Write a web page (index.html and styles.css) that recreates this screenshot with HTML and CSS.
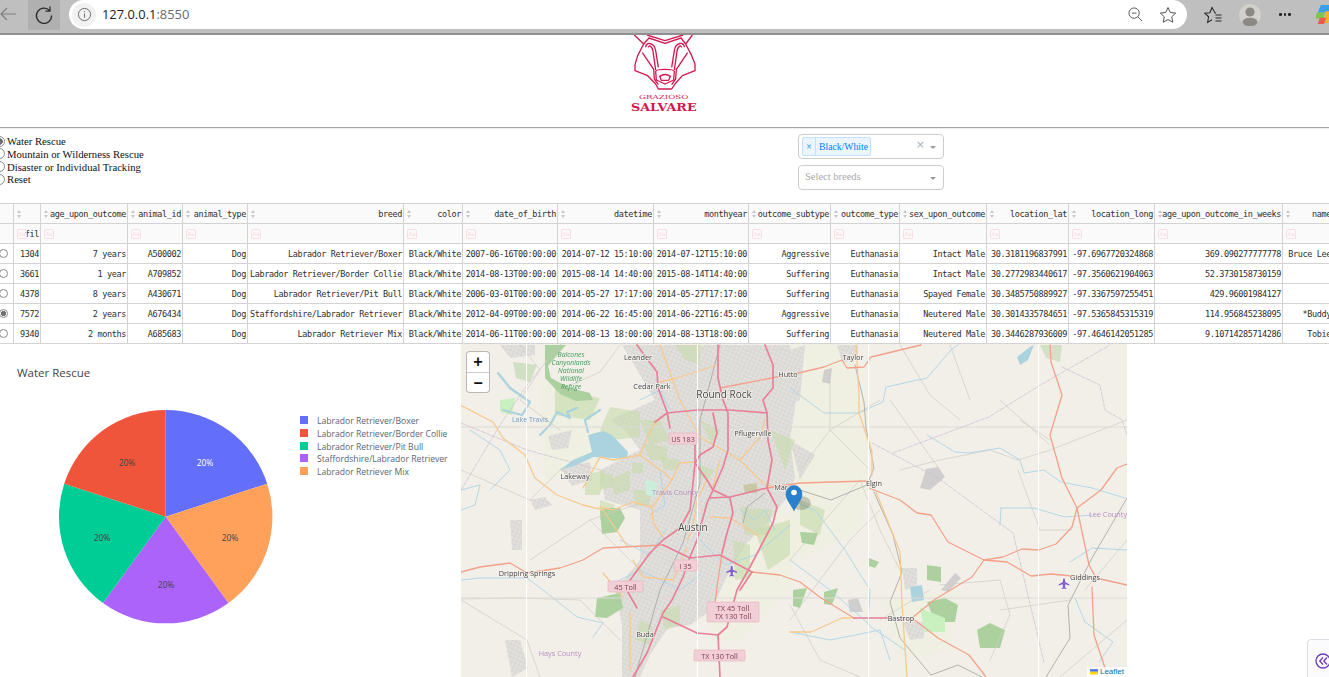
FILE: index.html
```html
<!DOCTYPE html>
<html lang="en">
<head>
<meta charset="utf-8">
<title>Grazioso Salvare Dashboard</title>
<link rel="stylesheet" href="styles.css">
</head>
<body>
<header class="chrome">
  <svg class="ico back" viewBox="0 0 16 16"><path d="M16 8H1M7 2 1 8l6 6"/></svg>
  <div class="reload"><svg class="ico" viewBox="0 0 20 20"><path d="M15.6 5.6A7.6 7.6 0 1 0 17.6 10.5M16 1.5v4.6h-4.6"/></svg></div>
  <div class="omnibox">
    <span class="info"><svg viewBox="0 0 16 16"><circle cx="8" cy="8" r="6.5"/><path d="M8 7v4.4M8 4.4v1.2"/></svg></span>
    <span class="url">127.0.0.1<span class="port">:8550</span></span>
    <svg class="ico zoomout" viewBox="0 0 16 16"><circle cx="6.5" cy="6.5" r="5.5"/><path d="M4 6.5h5M10.5 10.5 15 15"/></svg>
    <svg class="ico star" viewBox="0 0 18 18"><path d="m9 1.5 2.3 5 5.4.6-4 3.7 1.1 5.4L9 13.5l-4.8 2.7 1.1-5.4-4-3.7 5.4-.6z"/></svg>
  </div>
  <div class="tools">
    <svg class="ico fav" viewBox="0 0 18 18"><path d="M12 7.2 11 6.9 8 1.5 5.900 6.700 0.900 7.300 4.600 10.800 3.600 16.400 8 13.800M11.500 9h6M11.500 12h6M11.500 15h6"/></svg>
    <svg class="avatar" viewBox="0 0 22 22"><circle cx="11" cy="11" r="11" fill="#d3d1cd"/><circle cx="11" cy="8" r="4.600" fill="#8b8986"/><ellipse cx="11" cy="18" rx="7.500" ry="4.200" fill="#8b8986"/></svg>
    <span class="more"><i></i><i></i><i></i></span>
    <svg class="copilot" viewBox="0 0 14 18"><path d="M5 0h9v7H2z" fill="#3aa0e8"/><path d="M1 7h8L7 13H0z" fill="#7cc64a"/><path d="M9 6h5l-2 11H8z" fill="#f0b432"/><path d="M4 12h6l-2 6H2z" fill="#ec5a4a"/></svg>
  </div>
</header>

<div class="logo-band">
  <svg class="logo" viewBox="0 3 240 276">
    <g class="logo-lines">
      <path d="M28 3 56 30 38 65 30 92 30 110 68 125 92 150 100 165H140L150 150 172 125 210 110 210 90 200 65 182 30 202 3"/>
      <path d="M56 30 72 12 120 28 168 12 182 30"/>
      <path d="M66 3 120 20 174 3"/>
      <path d="M62 40C62 22 88 24 92 50L100 100M178 40C178 22 152 24 148 50L140 100"/>
      <path d="M70 40C72 32 82 36 84 52L92 108M170 40C168 32 158 36 156 52L148 108"/>
      <path d="M52 56 86 106 88 135 100 152M188 56 154 106 152 135 140 152"/>
      <path d="M92 112C94 104 146 104 148 112L146 138 120 150 94 138Z"/>
      <path d="M104 127Q120 116 136 127L131 139H109Z"/>
    </g>
    <text class="logo-sm" x="42" y="196" textLength="148" lengthAdjust="spacingAndGlyphs">GRAZIOSO</text>
    <text class="logo-lg" x="18" y="232" textLength="197" lengthAdjust="spacingAndGlyphs">SALVARE</text>
  </svg>
</div>
<div class="rule"></div>

<section class="controls">
  <div class="radios">
    <label class="radio"><input type="radio" name="rescue" checked>Water Rescue</label>
    <label class="radio"><input type="radio" name="rescue">Mountain or Wilderness Rescue</label>
    <label class="radio"><input type="radio" name="rescue">Disaster or Individual Tracking</label>
    <label class="radio"><input type="radio" name="rescue">Reset</label>
  </div>
  <div class="selects">
    <div class="select">
      <span class="tag"><span class="tag-x">×</span><span class="tag-label">Black/White</span></span>
      <span class="clear">×</span><span class="caret"></span>
    </div>
    <div class="select">
      <span class="placeholder">Select breeds</span>
      <span class="caret"></span>
    </div>
  </div>
</section>

<div class="table-wrap">
<table class="grid">
  <colgroup>
    <col class="c0"><col class="c1"><col class="c2"><col class="c3"><col class="c4"><col class="c5"><col class="c6"><col class="c7"><col class="c8"><col class="c9"><col class="c10"><col class="c11"><col class="c12"><col class="c13"><col class="c14"><col class="c15"><col class="c16">
  </colgroup>
  <thead>
    <tr class="head">
      <th></th>
      <th><span class="sort"></span></th>
      <th><span class="sort"></span>age_upon_outcome</th>
      <th><span class="sort"></span>animal_id</th>
      <th><span class="sort"></span>animal_type</th>
      <th><span class="sort"></span>breed</th>
      <th><span class="sort"></span>color</th>
      <th><span class="sort"></span>date_of_birth</th>
      <th><span class="sort"></span>datetime</th>
      <th><span class="sort"></span>monthyear</th>
      <th><span class="sort"></span>outcome_subtype</th>
      <th><span class="sort"></span>outcome_type</th>
      <th><span class="sort"></span>sex_upon_outcome</th>
      <th><span class="sort"></span>location_lat</th>
      <th><span class="sort"></span>location_long</th>
      <th><span class="sort"></span>age_upon_outcome_in_weeks</th>
      <th><span class="sort"></span>name</th>
    </tr>
    <tr class="filter">
      <th></th>
      <th><span class="aa">Aa</span>fil</th>
      <th><span class="aa">Aa</span></th><th><span class="aa">Aa</span></th><th><span class="aa">Aa</span></th><th><span class="aa">Aa</span></th><th><span class="aa">Aa</span></th><th><span class="aa">Aa</span></th><th><span class="aa">Aa</span></th><th><span class="aa">Aa</span></th><th><span class="aa">Aa</span></th><th><span class="aa">Aa</span></th><th><span class="aa">Aa</span></th><th><span class="aa">Aa</span></th><th><span class="aa">Aa</span></th><th><span class="aa">Aa</span></th><th><span class="aa">Aa</span></th>
    </tr>
  </thead>
  <tbody>
    <tr><td class="pick"><input type="radio" name="row"></td><td>1304</td><td>7 years</td><td>A500002</td><td>Dog</td><td>Labrador Retriever/Boxer</td><td>Black/White</td><td>2007-06-16T00:00:00</td><td>2014-07-12 15:10:00</td><td>2014-07-12T15:10:00</td><td>Aggressive</td><td>Euthanasia</td><td>Intact Male</td><td>30.3181196837991</td><td>-97.6967720324868</td><td>369.090277777778</td><td>Bruce Lee</td></tr>
    <tr><td class="pick"><input type="radio" name="row"></td><td>3661</td><td>1 year</td><td>A709852</td><td>Dog</td><td>Labrador Retriever/Border Collie</td><td>Black/White</td><td>2014-08-13T00:00:00</td><td>2015-08-14 14:40:00</td><td>2015-08-14T14:40:00</td><td>Suffering</td><td>Euthanasia</td><td>Intact Male</td><td>30.2772983440617</td><td>-97.3560621904063</td><td>52.3730158730159</td><td></td></tr>
    <tr><td class="pick"><input type="radio" name="row"></td><td>4378</td><td>8 years</td><td>A430671</td><td>Dog</td><td>Labrador Retriever/Pit Bull</td><td>Black/White</td><td>2006-03-01T00:00:00</td><td>2014-05-27 17:17:00</td><td>2014-05-27T17:17:00</td><td>Suffering</td><td>Euthanasia</td><td>Spayed Female</td><td>30.3485750889927</td><td>-97.3367597255451</td><td>429.96001984127</td><td></td></tr>
    <tr><td class="pick"><input type="radio" name="row" checked></td><td>7572</td><td>2 years</td><td>A676434</td><td>Dog</td><td>Staffordshire/Labrador Retriever</td><td>Black/White</td><td>2012-04-09T00:00:00</td><td>2014-06-22 16:45:00</td><td>2014-06-22T16:45:00</td><td>Aggressive</td><td>Euthanasia</td><td>Neutered Male</td><td>30.3014335784651</td><td>-97.5365845315319</td><td>114.956845238095</td><td>*Buddy</td></tr>
    <tr><td class="pick"><input type="radio" name="row"></td><td>9340</td><td>2 months</td><td>A685683</td><td>Dog</td><td>Labrador Retriever Mix</td><td>Black/White</td><td>2014-06-11T00:00:00</td><td>2014-08-13 18:00:00</td><td>2014-08-13T18:00:00</td><td>Suffering</td><td>Euthanasia</td><td>Neutered Male</td><td>30.3446287936009</td><td>-97.4646142051285</td><td>9.10714285714286</td><td>Tobie</td></tr>
  </tbody>
</table>
</div>

<main class="panels">
  <svg class="chart" viewBox="0 344 461 333">
    <text class="chart-title" x="17" y="377">Water Rescue</text>
    <path d="M165.700 516.700V410A106.700 106.700 0 0 1 267.200 483.700Z" fill="#636efa"/>
    <path d="M165.700 516.700 267.200 483.700A106.700 106.700 0 0 1 228.400 603Z" fill="#ffa15a"/>
    <path d="M165.700 516.700 228.400 603A106.700 106.700 0 0 1 103 603Z" fill="#ab63fa"/>
    <path d="M165.700 516.700 103 603A106.700 106.700 0 0 1 64.200 483.700Z" fill="#00cc96"/>
    <path d="M165.700 516.700 64.200 483.700A106.700 106.700 0 0 1 165.700 410Z" fill="#ef553b"/>
    <text class="pct pct-light" x="205" y="466">20%</text>
    <text class="pct" x="127" y="466">20%</text>
    <text class="pct" x="102" y="541">20%</text>
    <text class="pct" x="166" y="588">20%</text>
    <text class="pct" x="230" y="541">20%</text>
    <rect x="300" y="416" width="8" height="8" fill="#636efa"/>
    <rect x="300" y="429" width="8" height="8" fill="#ef553b"/>
    <rect x="300" y="442" width="8" height="8" fill="#00cc96"/>
    <rect x="300" y="454" width="8" height="8" fill="#ab63fa"/>
    <rect x="300" y="467" width="8" height="8" fill="#ffa15a"/>
    <text class="legend" x="317" y="423.500">Labrador Retriever/Boxer</text>
    <text class="legend" x="317" y="436.500">Labrador Retriever/Border Collie</text>
    <text class="legend" x="317" y="449.500">Labrador Retriever/Pit Bull</text>
    <text class="legend" x="317" y="461.500">Staffordshire/Labrador Retriever</text>
    <text class="legend" x="317" y="474.500">Labrador Retriever Mix</text>
  </svg>

  <div class="map">
    <svg class="tiles" viewBox="461 344 666 333">
      <defs>
        <pattern id="streets" width="4" height="4" patternUnits="userSpaceOnUse" patternTransform="rotate(24)">
          <rect width="4" height="4" fill="#e2e0dc"/>
          <path d="M0 0H4M0 0V4" stroke="#c4c2c0" stroke-width=".55"/>
        </pattern>
      </defs>
      <rect x="461" y="344" width="666" height="333" fill="#f2efe9"/>

      <g class="wash">
        <path d="M790 345H850L870 420 868 480 860 530 800 560 790 520Z"/>
        <path d="M770 500 800 530 790 590 740 640 710 640 730 560Z"/>
        <path d="M880 600 960 590 950 650 900 660Z"/>
        <path d="M540 380 600 400 600 470 545 480Z"/>
      </g>

      <g class="urban">
        <path d="M622 345H790L797 395 790 440 795 478 785 500 770 520 745 545 725 580 712 610 690 625 668 628 650 655 640 677H622L622 625 615 590 640 560 640 510 605 500 600 470 640 450 625 430 610 420 655 400 640 375Z"/>
        <path d="M548 436 572 430 568 448 552 450Z"/>
        <path d="M560 468 590 462 592 480 572 486Z"/>
        <path d="M790 440 815 455 800 480Z"/>
        <path d="M902 568 917 568 917 585 905 590Z"/>
        <path d="M903 622 924 622 924 638 910 640Z"/>
        <path d="M505 640 520 640 528 668 512 677Z"/>
        <path d="M510 520H522V550H512Z"/>
        <path d="M530 500 545 497 552 505 535 510Z"/>
        <path d="M500 345H535V355L510 358Z"/>
        <path d="M837 345H858V360L842 362Z"/>
        <path d="M790 350 805 345 800 400 790 405Z"/>
      </g>
      <g class="solidgray">
        <path d="M926 469 938 467 945 477 930 490 920 488Z"/>
        <path d="M941 590 955 573 961 578 948 592Z"/>
        <path d="M848 600 858 598 863 612 850 612Z"/>
        <path d="M824 370 832 368 830 384 822 382Z"/>
      </g>

      <g class="patch">
        <path d="M610 407 640 412 640 437 612 440 600 430Z"/>
        <path d="M640 420 660 420 670 440 650 445Z"/>
        <path d="M643 443 667 447 667 460 650 460Z"/>
        <path d="M660 457 680 460 676 470 664 470Z"/>
        <path d="M600 473 613 475 613 487 600 490Z"/>
        <path d="M632 463 643 463 643 473 632 473Z"/>
        <path d="M633 490 650 490 650 507 635 505Z"/>
        <path d="M585 475 605 470 600 495 585 495Z"/>
        <path d="M610 480 630 470 630 490 615 495Z"/>
        <path d="M740 507 772 510 768 535 745 535Z"/>
        <path d="M733 540 750 545 750 578 735 580Z"/>
        <path d="M770 430 795 440 785 470Z"/>
        <path d="M755 530 790 520 790 555 768 570Z"/>
        <path d="M675 345 700 345 700 365 685 360Z"/>
        <path d="M700 420 720 430 712 445Z"/>
        <path d="M600 500 615 505 610 520 600 520Z"/>
        <path d="M800 500 825 510 820 535 800 525Z"/>
        <path d="M555 388 600 398 590 420 555 415Z"/>
        <path d="M700 465 715 470 708 480 700 478Z"/>
        <path d="M640 620 652 625 650 645 635 640Z"/>
        <path d="M660 610 680 605 680 625 665 630Z"/>
      </g>
      <path class="khaki" d="M743 485 757 483 757 493 745 493Z"/>
      <path class="cyanpark" d="M645 480 657 482 656 497 646 495Z"/>
      <g class="park">
        <path d="M545 345H566L558 354 548 366 551 378 570 388 590 393 593 400 576 401 560 394 545 378Z"/>
        <path d="M600 511 607 508H620L625 518 617 532 602 534Z"/>
        <path d="M597 598 620 593 623 608 607 618 595 617Z"/>
        <path d="M977 630 990 623 1005 630 1000 648 980 648Z"/>
        <path d="M927 565 941 567 941 582 927 580Z"/>
        <path d="M927 602 945 598 958 605 955 622 935 622Z"/>
        <path d="M800 532 818 533 814 545 802 543Z"/>
        <path d="M869 558 879 562 875 568 869 566Z"/>
        <path d="M793 590 807 588 800 608 793 606Z"/>
        <path d="M824 592 838 588 832 605 824 604Z"/>
        <path d="M513 362 537 365 530 382 516 378Z" opacity=".5"/>
        <path d="M1040 345H1062L1060 362 1046 358Z" opacity=".45"/>
      </g>
      <path class="lightgreen" d="M920 608 945 618 945 632 925 632Z"/>
      <path class="lightgreen" d="M500 400 515 398 512 415 500 412Z"/>

      <g class="water">
        <path d="M588 435 603 431 612 435 628 452 627 458 613 458 593 457 577 465 560 470 573 460 592 452Z"/>
        <path d="M1017 357 1030 347 1034 345 1028 360 1020 365Z"/>
        <path d="M910 587 922 585 924 600 912 602Z"/>
      </g>
      <g class="river-thick">
        <path d="M577 408 567 412 570 418 557 412 550 425 540 435"/>
        <path d="M498 373 510 388 530 402 522 415 503 410"/>
        <path d="M600 410 585 420 588 432"/>
      </g>
      <g class="river">
        <path d="M461 490 480 485 475 505 461 510"/>
        <path d="M461 580 480 578 527 578 547 593 577 617 603 623 593 637"/>
        <path d="M790 388 824 413 859 413 883 402 886 387 927 378 951 350 958 345"/>
        <path d="M927 435 955 452 969 453 1000 448 1020 460 1024 473 1044 470 1061 482 1092 488 1125 498"/>
        <path d="M1001 508 1000 525M1001 508 1034 508 1065 517 1092 515"/>
        <path d="M1070 562 1092 548 1127 550"/>
        <path d="M1075 598 1085 622 1113 642 1099 662"/>
        <path d="M790 500 815 510 845 550 870 590 868 625 905 650"/>
        <path d="M790 560 830 590 870 625"/>
        <path d="M790 632 830 640 880 630 890 660"/>
        <path d="M620 540 650 555 665 530"/>
        <path d="M640 400 660 390 670 410"/>
        <path d="M660 470 665 505 650 515"/>
        <path d="M740 510 755 520 765 510 775 530"/>
        <path d="M700 540 725 565 755 555 790 525"/>
        <path d="M470 430 500 450 510 470 490 490"/>
        <path d="M610 585 640 570 680 590 700 575"/>
      </g>

      <g class="minor">
        <path d="M461 470 530 500 560 470 590 480"/>
        <path d="M530 560 590 520 650 500M590 520 650 580"/>
        <path d="M520 345 540 370 520 400 560 430"/>
        <path d="M461 599 520 598 580 600 620 640"/>
        <path d="M620 345 600 372 560 390"/>
        <path d="M800 470 830 430 880 400M830 370 830 430 870 470"/>
        <path d="M900 345 930 395 960 420M950 345 970 400M1000 400 1050 445M890 400 940 470"/>
        <path d="M900 470 940 460 990 450 1018 460M1018 460 1050 450 1127 420"/>
        <path d="M1018 470 1040 530 1072 530M1020 420 1050 440"/>
        <path d="M940 585 1000 580 1010 615 990 660M880 620 930 590M1000 610 1070 600"/>
        <path d="M860 480 880 530 900 570M850 540 880 510"/>
        <path d="M1060 677 1127 620M1085 590 1127 540"/>
        <path d="M790 560 860 480M790 620 850 540M461 600 527 640 540 677"/>
        <path d="M790 605 820 660 860 677"/>
      </g>
      <path class="fence" d="M461 427H1127M461 598H1127"/>
      <path class="boundary" d="M461 490 500 425 527 385 561 344M461 423 527 450 600 470"/>
      <path class="boundary" d="M872 443 938 478 1013 533 1044 662M893 453 989 417 1037 387 1110 345M1062 367 1100 385 1105 410 1122 420 1127 435"/>
      <path class="rail" d="M720 345 700 420 700 483 683 543 660 590 635 677"/>
      <path class="rail" d="M855 365 864 402 866 428 874 468 867 485 831 500 800 490M874 492 893 535 902 572 890 602 900 638 931 675 958 665 982 677M1127 498 1092 558 1068 605 1070 638 1046 677M743 523 747 507 765 493"/>

      <g class="yellow">
        <path d="M460 405 493 422 503 438 525 455 535 478 557 495 583 505 603 510 628 547"/>
        <path d="M583 488 600 457 613 460 640 455 653 425 667 413"/>
        <path d="M640 455 663 472 672 480 652 507 653 523 663 537"/>
        <path d="M672 480 680 463 695 462"/>
        <path d="M600 507 613 510 633 502 652 507"/>
        <path d="M660 382 677 378 717 365"/>
        <path d="M660 345 680 400 700 437 740 460 763 483 773 487"/>
        <path d="M765 420 760 437 740 460"/>
        <path d="M707 480 697 500 693 527 687 540"/>
        <path d="M720 460 713 487"/>
        <path d="M710 517 730 518 760 537"/>
        <path d="M633 560 643 577 673 580 687 547"/>
        <path d="M603 573 623 597"/>
        <path d="M630 613 630 670"/>
        <path d="M859 413 872 452 872 475"/>
        <path d="M876 492 900 552 902 605 907 677"/>
        <path d="M790 632 811 632 842 618 855 618"/>
        <path d="M856 345 859 395 859 413"/>
      </g>
      <g class="salmon">
        <path d="M720 388 777 377 790 375 824 367 842 360 847 368 864 367 871 357 921 345"/>
        <path d="M767 488 800 483 867 481"/>
        <path d="M869 488 900 500 917 513 931 515 948 542 984 560 1003 557 1022 549 1039 550 1056 544 1072 527 1077 508 1101 490 1117 468 1127 464"/>
        <path d="M1050 345 1051 362 1062 395 1050 435 1062 478 1077 508 1089 565 1096 578"/>
        <path d="M984 560 1007 562 1031 576 1051 574 1072 576 1096 578 1127 585"/>
        <path d="M1092 587 1094 635 1108 677"/>
        <path d="M984 560 972 577 934 600 912 618 938 638 969 655 986 677"/>
        <path d="M752 572 780 575 800 582 821 598 854 618"/>
        <path d="M461 572 480 567 510 563 527 573 560 568 583 560 603 548 663 545"/>
        <path d="M722 553 717 587 715 603"/>
      </g>
      <g class="pink">
        <path d="M637 345 657 372 658 388 667 412 670 428"/>
        <path d="M695 445 695 463 693 483 690 510 680 528 663 540 650 553 625 587 637 608"/>
        <path d="M718 345 718 378 723 400 728 413 728 450 723 467 713 490 707 503 697 540 690 557 683 577 672 600 663 613 647 653 633 677"/>
        <path d="M765 345 773 365 773 388 763 400 767 413 768 440 772 460 767 488 777 507 773 523 750 567 737 590 727 627 718 635 720 677"/>
        <path d="M655 422 667 413 697 410 730 410 767 413"/>
        <path d="M713 413 717 433 713 447 700 455 695 463 707 480 713 490 730 498 733 513 727 533 722 553"/>
        <path d="M710 498 730 497 767 488"/>
        <path d="M663 545 690 558 720 555 752 572"/>
        <path d="M663 617 697 633 718 635"/>
        <path d="M854 618 888 618 912 620"/>
        <path d="M752 572 740 590"/>
      </g>
      <path class="seam" d="M526.500 344V677M697.500 344V677M868.500 344V677M1038.500 344V677"/>

      <g class="shield">
        <rect x="669" y="433" width="28" height="11" rx="1"/>
        <rect x="674" y="560" width="23" height="11" rx="1"/>
        <rect x="608" y="581" width="35" height="11" rx="1"/>
        <rect x="707" y="602" width="52" height="20" rx="1"/>
        <rect x="694" y="650" width="51" height="11" rx="1"/>
      </g>
      <g class="shield-text">
        <text x="683" y="441.500">US 183</text>
        <text x="685.500" y="568.500">I 35</text>
        <text x="625.500" y="589.500">45 Toll</text>
        <text x="733" y="610.500">TX 45 Toll</text>
        <text x="733" y="619">TX 130 Toll</text>
        <text x="719.500" y="658.500">TX 130 Toll</text>
      </g>
      <g class="place">
        <text x="638" y="360">Leander</text>
        <text x="652" y="389">Cedar Park</text>
        <text class="big" x="724" y="397.500">Round Rock</text>
        <text x="788" y="377">Hutto</text>
        <text x="853" y="360">Taylor</text>
        <text x="753" y="436">Pflugerville</text>
        <text x="575" y="478.500">Lakeway</text>
        <text x="781" y="490">Mar</text>
        <text class="big" x="693" y="531">Austin</text>
        <text x="527" y="576">Dripping Springs</text>
        <text x="645" y="636.500">Buda</text>
        <text x="901" y="620.500">Bastrop</text>
        <text x="874" y="486">Elgin</text>
        <text x="1085" y="579.500">Giddings</text>
      </g>
      <g class="county">
        <text x="675" y="494.500">Travis County</text>
        <text x="560" y="656">Hays County</text>
        <text x="1108" y="516.500">Lee County</text>
      </g>
      <text class="lake" x="530" y="421.500">Lake Travis</text>
      <g class="refuge">
        <text x="571" y="357">Balcones</text>
        <text x="571" y="365">Canyonlands</text>
        <text x="571" y="373">National</text>
        <text x="571" y="381">Wildlife</text>
        <text x="571" y="389">Refuge</text>
      </g>
      <g class="plane">
        <path d="M731 566h1.400l.6 3.800 4 2v1.200l-4-1.200-.3 3 1.400 1v.8l-2.400-.6-2.400.6v-.8l1.400-1-.3-3-4 1.200v-1.200l4-2z"/>
        <path d="M1063.300 578.500h1.400l.6 3.800 4 2v1.200l-4-1.200-.3 3 1.400 1v.8l-2.400-.6-2.400.6v-.8l1.400-1-.3-3-4 1.200v-1.200l4-2z"/>
      </g>
      <ellipse class="pin-shadow" cx="801" cy="503" rx="10" ry="7"/>
      <path class="pin" d="M794 510.500C790.500 504 786 499.500 786 494A8 8.500 0 0 1 802 494C802 499.500 797.500 504 794 510.500Z"/>
      <circle cx="794" cy="492.500" r="2.800" fill="#fff"/>
    </svg>
    <div class="zoom-ctl">
      <span class="zoom-btn">+</span>
      <span class="zoom-btn">−</span>
    </div>
    <div class="attrib">
      <svg class="flag" viewBox="0 0 12 8"><rect width="12" height="4" fill="#4c7be1"/><rect y="4" width="12" height="4" fill="#ffd500"/></svg>
      <span class="attrib-link">Leaflet</span>
    </div>
  </div>
</main>

<aside class="ext-tab">
  <svg viewBox="0 0 16 16"><circle cx="8" cy="8" r="7"/><path d="M8 4.500 4.800 8 8 11.500M12 4.500 8.800 8 12 11.500"/></svg>
</aside>
</body>
</html>
```

FILE: styles.css
```css
* { box-sizing: border-box; }
html, body { margin: 0; padding: 0; height: 677px; overflow: hidden; background: #fff; }
body { position: relative; font-family: "Liberation Serif", serif; color: #111; }

/* browser chrome */
.chrome { height: 35px; background: #bfbfbf; border-bottom: 2px solid #8f8f8f; display: flex; align-items: flex-start; }
.ico { fill: none; stroke: #2b2b2b; stroke-width: 1.2; }
.back { width: 16px; height: 16px; margin: 6px 0 0 0; stroke: #808080; flex: none; }
.reload { width: 32px; height: 30px; margin-left: 12px; background: #b0b0b0; display: flex; align-items: center; justify-content: center; flex: none; }
.reload svg { width: 20px; height: 20px; stroke-width: 1.3; }
.omnibox { width: 1118px; height: 29px; margin-left: 9px; background: #fff; border-radius: 15px; display: flex; align-items: center; flex: none; position: relative; }
.info { width: 24px; height: 24px; margin-left: 3px; border-radius: 50%; background: #f1f1f1; display: flex; align-items: center; justify-content: center; }
.info svg { width: 15px; height: 15px; fill: none; stroke: #666; stroke-width: 1; }
.url { margin: -1px 0 0 6px; font: 12.900px "Open Sans", sans-serif; color: #222; }
.port { color: #6a6a6a; }
.zoomout { width: 15px; height: 15px; margin-left: auto; stroke: #555; stroke-width: 1; }
.star { width: 18px; height: 18px; margin: 0 10px 0 16px; stroke: #555; stroke-width: 1; }
.tools { display: flex; align-items: center; height: 29px; flex: 1; position: relative; }
.fav { width: 18px; height: 18px; margin-left: 17px; flex: none; stroke-width: 1.1; }
.avatar { width: 22px; height: 22px; margin-left: 17px; flex: none; }
.more { display: flex; gap: 2px; margin-left: 18px; flex: none; }
.more i { width: 2.500px; height: 2.500px; background: #222; border-radius: 50%; }
.copilot { width: 16px; height: 19px; margin-left: 24px; flex: none; }

/* logo */
.logo-band { height: 92px; display: flex; justify-content: center; }
.logo { width: 80px; height: 92px; }
.logo-lines path { fill: none; stroke: #d3184f; stroke-width: 4; stroke-linejoin: round; }
.logo-sm { font: 17px "DejaVu Serif", serif; fill: #d3184f; }
.logo-lg { font: bold 31px "DejaVu Serif", serif; fill: #d3184f; }
.rule { height: 2px; background: #a3a3a3; border-bottom: 1px solid #eee; }

/* controls */
.controls { height: 74px; display: flex; align-items: flex-start; }
.radios { width: 798px; padding-top: 6px; display: flex; flex-direction: column; flex: none; }
.radio { height: 12.670px; display: flex; align-items: center; font-size: 10.700px; line-height: 12px; white-space: nowrap; }
.radio input, .pick input { appearance: none; border: 1px solid #8a8a8a; border-radius: 50%; background: #fff; }
.radio input { width: 11px; height: 11px; margin: 0 2px 0 -6px; flex: none; }
input:checked { background: radial-gradient(circle closest-side, #6f6f6f 0 68%, #fff 78%); }
.selects { width: 146px; padding-top: 5px; display: flex; flex-direction: column; gap: 6px; flex: none; }
.select { height: 25px; border: 1px solid #ccc; border-radius: 4px; display: flex; align-items: center; padding-left: 3px; background: #fff; }
.tag { height: 19px; display: flex; align-items: stretch; background: #ebf5ff; border: 1px solid #c2e0ff; border-radius: 2px; color: #007eff; font-size: 9.700px; line-height: 18px; }
.tag-x { width: 13px; text-align: center; border-right: 1px solid #c2e0ff; }
.tag-label { padding: 0 2px 0 3px; }
.clear { margin: 0 0 4px auto; color: #a9b4c0; font: 11px/11px "DejaVu Sans", sans-serif; }
.caret { width: 0; height: 0; margin: 2px 7px 0 5px; border: 3.500px solid transparent; border-top-color: #999; border-bottom: 0; }
.placeholder { margin: 0 auto 3px 3px; color: #aaa; font-size: 10.500px; }

/* table */
.table-wrap { height: 141px; overflow: hidden; }
.grid { width: 1333px; table-layout: fixed; border-collapse: separate; border-spacing: 0; font: 8.500px "DejaVu Sans Mono", monospace; letter-spacing: -.37px; color: #2e2e2e; }
.c0 { width: 14px; } .c1 { width: 27px; } .c2 { width: 87px; } .c3 { width: 55px; } .c4 { width: 65px; } .c5 { width: 156px; } .c6 { width: 59px; } .c7 { width: 95px; } .c8 { width: 96px; } .c9 { width: 95px; } .c10 { width: 82px; } .c11 { width: 69px; } .c12 { width: 87px; } .c13 { width: 82px; } .c14 { width: 86px; } .c15 { width: 128px; } .c16 { width: 50px; }
.grid th, .grid td { height: 20px; padding: 1px 1px 0 0; text-align: right; white-space: nowrap; overflow: hidden; font-weight: 400; border-right: 1px solid #d3d3d3; border-bottom: 1px solid #d3d3d3; position: relative; }
.head th { height: 21px; background: #fafafa; border-top: 1px solid #d3d3d3; }
.filter th { background: #fafafa; }
.sort { position: absolute; left: 3px; top: 6px; width: 5px; height: 8px; }
.sort::before, .sort::after { content: ""; position: absolute; left: 0; border-left: 2.500px solid transparent; border-right: 2.500px solid transparent; }
.sort::before { top: 0; border-bottom: 3px solid #c8c8c8; }
.sort::after { bottom: 0; border-top: 3px solid #c8c8c8; }
.aa { position: absolute; left: 3px; top: 5px; width: 10px; height: 10px; border: 1px solid #fbdde4; border-radius: 2px; color: #fcd9e1; font: 5.500px/8px "DejaVu Sans", sans-serif; letter-spacing: 0; text-align: center; }
.grid .pick { padding: 0; text-align: left; }
.pick input { display: block; width: 9px; height: 9px; margin: 0 0 0 -1px; }

/* bottom panels */
.panels { display: flex; height: 333px; }
.chart { width: 461px; height: 333px; flex: none; }
.chart-title { font: 11.500px "Open Sans", sans-serif; fill: #444; }
.pct { font: 8.500px "Open Sans", sans-serif; fill: #444; text-anchor: middle; }
.pct-light { fill: #fff; }
.legend { font: 8.600px "Open Sans", sans-serif; fill: #5a6472; }

/* map */
.map { width: 666px; height: 333px; flex: none; position: relative; overflow: hidden; }
.tiles { display: block; width: 666px; height: 333px; filter: blur(.35px); }
.tiles path, .tiles g { stroke-linejoin: round; stroke-linecap: round; }
.wash path { fill: #f0f0e2; }
.urban path { fill: url(#streets); }
.solidgray path { fill: #d0cece; }
.patch path { fill: #c7dcae; opacity: .65; }
.khaki { fill: #c9c8a4; }
.cyanpark { fill: #c9efdc; }
.park path { fill: #add19e; }
.lightgreen { fill: #c9f0bf; }
.water path { fill: #aad3df; }
.river-thick path { fill: none; stroke: #aad3df; stroke-width: 2.200; }
.river path { fill: none; stroke: #a9d5e6; stroke-width: .9; }
.minor path { fill: none; stroke: #cfccc6; stroke-width: .7; }
.fence { fill: none; stroke: #dcdad8; stroke-width: 1; }
.boundary { fill: none; stroke: #cfc2cf; stroke-width: .8; stroke-dasharray: 4 1.500; }
.rail { fill: none; stroke: #a3a2a0; stroke-width: .8; }
.yellow path { fill: none; stroke: #f7c98f; stroke-width: 1.300; }
.salmon path { fill: none; stroke: #f4a18a; stroke-width: 1.300; }
.pink path { fill: none; stroke: #e97f99; stroke-width: 1.700; }
.seam { fill: none; stroke: #fff; stroke-width: 1; }
.shield rect { fill: #f2cfd6; stroke: #e5b3bd; stroke-width: .6; }
.shield-text text { font: 7.300px "Open Sans", sans-serif; fill: #7c3c50; text-anchor: middle; }
.place text { font: 7.300px "Open Sans", sans-serif; fill: #444; text-anchor: middle; stroke: #f6f4f0; stroke-width: 1.500px; paint-order: stroke; }
.place .big { font-size: 10px; }
.county text { font: 7.300px "Open Sans", sans-serif; fill: #b58fc0; text-anchor: middle; }
.lake { font: 7px "Open Sans", sans-serif; fill: #6f9cc8; text-anchor: middle; }
.refuge text { font: italic 6.800px "Open Sans", sans-serif; fill: #3e9a56; text-anchor: middle; }
.plane path { fill: #7f5fd0; }
.pin-shadow { fill: #000; opacity: .18; }
.pin { fill: #2a81cb; stroke: #1f6db0; stroke-width: .5; }
.zoom-ctl { position: absolute; left: 6px; top: 8px; width: 22px; display: flex; flex-direction: column; background: #fff; border-radius: 3px; box-shadow: 0 0 0 1px #b9b7b4; }
.zoom-btn { height: 20px; display: flex; align-items: center; justify-content: center; font: bold 15px "DejaVu Sans Mono", monospace; color: #111; }
.zoom-btn + .zoom-btn { border-top: 1px solid #ccc; }
.attrib { position: absolute; right: 0; bottom: 0; height: 10px; padding: 0 3px; display: flex; align-items: center; gap: 2px; background: rgba(255,255,255,.8); font: 8px/10px "Liberation Sans", sans-serif; }
.flag { width: 8px; height: 5.500px; }
.attrib-link { color: #0078a8; }

/* side tab */
.ext-tab { position: absolute; left: 1307px; top: 639px; width: 30px; height: 50px; background: #fbfbfd; border: 1px solid #dcdce4; border-radius: 4px 0 0 0; padding: 13px 0 0 7px; }
.ext-tab svg { display: block; width: 16px; height: 16px; fill: none; stroke: #6c39b8; stroke-width: 1.300; }
```
